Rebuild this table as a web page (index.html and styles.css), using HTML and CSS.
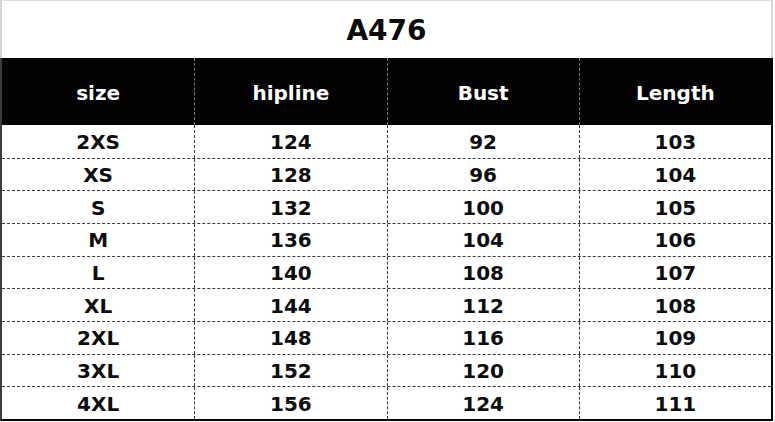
FILE: index.html
```html
<!DOCTYPE html>
<html>
<head>
<meta charset="utf-8">
<link rel="stylesheet" href="styles.css">
</head>
<body>
<div class="sheet">
  <div class="title">A476</div>
  <div class="table">
    <div class="head">
      <div class="cell">size</div>
      <div class="cell">hipline</div>
      <div class="cell">Bust</div>
      <div class="cell">Length</div>
    </div>
    <div class="body">
      <div class="row"><div class="cell">2XS</div><div class="cell">124</div><div class="cell">92</div><div class="cell">103</div></div>
      <div class="row"><div class="cell">XS</div><div class="cell">128</div><div class="cell">96</div><div class="cell">104</div></div>
      <div class="row"><div class="cell">S</div><div class="cell">132</div><div class="cell">100</div><div class="cell">105</div></div>
      <div class="row"><div class="cell">M</div><div class="cell">136</div><div class="cell">104</div><div class="cell">106</div></div>
      <div class="row"><div class="cell">L</div><div class="cell">140</div><div class="cell">108</div><div class="cell">107</div></div>
      <div class="row"><div class="cell">XL</div><div class="cell">144</div><div class="cell">112</div><div class="cell">108</div></div>
      <div class="row"><div class="cell">2XL</div><div class="cell">148</div><div class="cell">116</div><div class="cell">109</div></div>
      <div class="row"><div class="cell">3XL</div><div class="cell">152</div><div class="cell">120</div><div class="cell">110</div></div>
      <div class="row"><div class="cell">4XL</div><div class="cell">156</div><div class="cell">124</div><div class="cell">111</div></div>
    </div>
  </div>
</div>
</body>
</html>
```

FILE: styles.css
```css
html, body {
  margin: 0;
  padding: 0;
  background: #ffffff;
}

body {
  width: 775px;
  height: 422px;
  overflow: hidden;
  font-family: "DejaVu Sans", "Liberation Sans", sans-serif;
  font-weight: bold;
}

.sheet {
  width: 773px;
}

.title {
  box-sizing: border-box;
  height: 58px;
  border-top: 1px solid #dcdcdc;
  border-left: 2px solid #d4d4d4;
  border-right: 2px solid #d8d8d8;
  display: flex;
  align-items: center;
  justify-content: center;
  font-size: 28px;
  color: #0a0a0a;
  padding-top: 2px;
}

.table {
  box-sizing: border-box;
  border-left: 2px solid #3c3c3c;
  border-right: 2px solid #050505;
  border-bottom: 2px solid #050505;
}

.head {
  display: grid;
  grid-template-columns: repeat(4, 1fr);
  height: 67px;
  background: #030303;
  color: #ffffff;
  font-size: 20px;
}

.head .cell {
  display: flex;
  align-items: center;
  justify-content: center;
  padding-top: 2px;
}

.head .cell + .cell {
  border-left: 1px dashed #7a7a7a;
}

.body {
  display: grid;
  grid-template-rows: repeat(9, 1fr);
  height: 294px;
}

.row {
  display: grid;
  grid-template-columns: repeat(4, 1fr);
  font-size: 20px;
  color: #0d0d0d;
}

.row + .row {
  border-top: 1px dashed #3a3a3a;
}

.row .cell {
  display: flex;
  align-items: center;
  justify-content: center;
  padding-top: 1px;
}

.row .cell + .cell {
  border-left: 1px dashed #3a3a3a;
}
```
